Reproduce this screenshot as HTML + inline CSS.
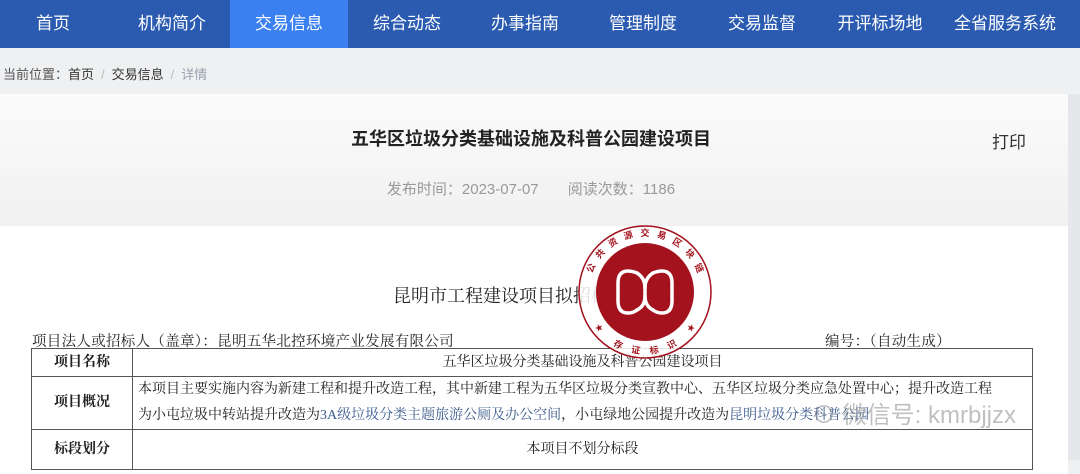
<!DOCTYPE html>
<html><head><meta charset="utf-8"><style>
*{margin:0;padding:0;box-sizing:border-box}
body{width:1080px;height:460px;overflow:hidden;background:#eff0f2;font-family:"Liberation Sans","Noto Sans CJK SC",sans-serif;position:relative}
.nav{position:absolute;left:0;top:0;width:1080px;height:48px;background:#2a5bb0}
.nav span{position:absolute;top:0;height:48px;line-height:48px;color:#fff;font-size:17px;text-align:center;width:118px}
.nav .act{background:#3b80f0}
.bc{position:absolute;left:3px;top:64px;font-size:13px;color:#555}
.bc i{font-style:normal;color:#bbb;margin:0 7px}
.card{position:absolute;left:0;top:94px;width:1068px;height:380px;background:#fff}
.hd{position:absolute;left:0;top:0;width:1068px;height:132px;background:linear-gradient(#fbfbfb,#f1f1f1)}
.t{position:absolute;left:0;width:1062px;text-align:center;top:31px;font-size:18px;font-weight:bold;color:#222}
.pr{position:absolute;left:992px;top:34px;font-size:17px;color:#333}
.dt{position:absolute;left:0;width:1062px;text-align:center;top:84px;font-size:15px;color:#999}
.serif{font-family:"Liberation Serif","Noto Serif CJK SC",serif;color:#222}
table{position:absolute;left:31px;top:254px;width:1002px;border-collapse:collapse;font-size:14px}
td{border:1px solid #555;padding:0 5px;line-height:26px}
.st{position:absolute;left:0;top:0;width:0;height:0}
.st b{position:absolute;left:-5px;top:-64px;width:10px;font-size:9px;line-height:10px;text-align:center;color:#a3121d;font-family:"Noto Sans CJK SC",sans-serif;font-weight:bold;transform-origin:5px 64px}
.st b.bt{top:54px;transform-origin:5px -54px}
</style></head><body>
<div class="nav">
<span style="left:-6px">首页</span><span style="left:113px">机构简介</span><span class="act" style="left:230px">交易信息</span><span style="left:348px">综合动态</span><span style="left:466px">办事指南</span><span style="left:584px">管理制度</span><span style="left:703px">交易监督</span><span style="left:821px">开评标场地</span><span style="left:940px;width:130px">全省服务系统</span>
</div>
<div class="bc">当前位置：<span style="color:#333">首页</span><i>/</i><span style="color:#333">交易信息</span><i>/</i><span style="color:#9aa3b0">详情</span></div>
<div class="card">
<div class="hd">
<div class="t">五华区垃圾分类基础设施及科普公园建设项目</div>
<div class="pr">打印</div>
<div class="dt">发布时间：2023-07-07&nbsp;&nbsp;&nbsp;&nbsp;&nbsp;&nbsp;&nbsp;阅读次数：1186</div>
</div>
<div class="serif" style="position:absolute;left:393px;top:188px;font-size:18px">昆明市工程建设项目拟招标公告</div>
<div class="serif" style="position:absolute;left:32px;top:236px;font-size:14.5px;letter-spacing:0.3px">项目法人或招标人（盖章）：昆明五华北控环境产业发展有限公司</div>
<div class="serif" style="position:absolute;left:825px;top:236px;font-size:14.5px;letter-spacing:0.3px">编号：（自动生成）</div>
<table class="serif">
<tr style="height:28px"><td style="width:101px;text-align:center;font-weight:bold">项目名称</td><td style="text-align:center">五华区垃圾分类基础设施及科普公园建设项目</td></tr>
<tr style="height:53px"><td style="text-align:center;font-weight:bold">项目概况</td><td style="white-space:nowrap">本项目主要实施内容为新建工程和提升改造工程，其中新建工程为五华区垃圾分类宣教中心、五华区垃圾分类应急处置中心；提升改造工程<br>为小屯垃圾中转站提升改造为<span style="color:#3a5a8c">3A级垃圾分类主题旅游公厕及办公空间</span>，小屯绿地公园提升改造为<span style="color:#3a5a8c">昆明垃圾分类科普公园</span></td></tr>
<tr style="height:40px"><td style="text-align:center;font-weight:bold">标段划分</td><td style="text-align:center">本项目不划分标段</td></tr>
</table>
</div>
<div style="position:absolute;left:1068px;top:94px;width:12px;height:366px;background:#e6e7ea"></div>
<svg style="position:absolute;left:575px;top:222px" width="140" height="140" viewBox="0 0 140 140">
<circle cx="70" cy="70" r="66" fill="rgba(255,255,255,0.85)" stroke="#a3121d" stroke-width="1.5"/>
<circle cx="70" cy="70" r="49" fill="#a3121d"/>
<g fill="none" stroke="#fff" stroke-width="3.5" stroke-linecap="round">
<path d="M62 51 Q57 49 53 49 Q43 49 43 61 L43 79 Q43 91 53 91 Q58 91 62 88"/>
<path d="M62 51 Q70 56 70 66 L70 74 Q70 84 62 88" />
<path d="M78 51 Q83 49 87 49 Q97 49 97 61 L97 79 Q97 91 87 91 Q82 91 78 88"/>
<path d="M78 51 Q70 56 70 66 M70 74 Q70 84 78 88" />
</g>
</svg>
<div class="st" style="left:645px;top:292px">
<b style="transform:rotate(-66deg)">公</b><b style="transform:rotate(-49.5deg)">共</b><b style="transform:rotate(-33deg)">资</b><b style="transform:rotate(-16.5deg)">源</b><b>交</b><b style="transform:rotate(16.5deg)">易</b><b style="transform:rotate(33deg)">区</b><b style="transform:rotate(49.5deg)">块</b><b style="transform:rotate(66deg)">链</b>
<b class="bt" style="transform:rotate(27deg)">存</b><b class="bt" style="transform:rotate(9deg)">证</b><b class="bt" style="transform:rotate(-9deg)">标</b><b class="bt" style="transform:rotate(-27deg)">识</b>
<b class="bt" style="transform:rotate(52deg);font-size:8px">★</b><b class="bt" style="transform:rotate(-52deg);font-size:8px">★</b>
</div>
<div style="position:absolute;left:812px;top:395px;font-size:24px;color:rgba(140,140,140,0.55)">⊙ 微信号: kmrbjjzx</div>
</body></html>
